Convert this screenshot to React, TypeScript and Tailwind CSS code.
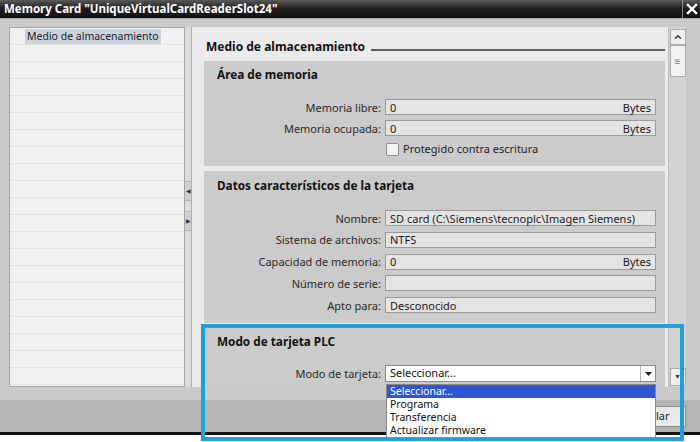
import { ChevronUp } from "lucide-react";

type FieldProps = { label: string; value?: string; unit?: string };

function Field({ label, value, unit }: FieldProps) {
  return (
    <div className="grid h-[16px] grid-cols-[177px_271px] items-center gap-x-[4px]">
      <span className="text-right text-[11px] leading-none text-[#2a2a2a]">{label}</span>
      <div className="flex h-[16px] items-center justify-between border border-[#9a9a9a] bg-[#e4e4e4] px-[4px] text-[11px] leading-none text-[#1a1a1a]">
        <span>{value}</span>
        {unit && <span>{unit}</span>}
      </div>
    </div>
  );
}

function Section({ title, children, className = "" }: { title: string; children?: React.ReactNode; className?: string }) {
  return (
    <div className={`bg-[#cbcbcb] pl-[13px] ${className}`}>
      <h3 className="text-[11.75px] font-bold leading-[16px] text-[#111]">{title}</h3>
      {children}
    </div>
  );
}

const dropdownItems = ["Seleccionar...", "Programa", "Transferencia", "Actualizar firmware"];

export default function App() {
  return (
    <div className="relative h-[442px] w-[700px] overflow-hidden bg-[#c6c6c6] font-['Noto_Sans',sans-serif]">
      {/* title bar */}
      <div className="flex h-[18px] bg-gradient-to-b from-[#5a5a5a] via-[#1d1d1d] to-[#121212]">
        <div className="flex-1 pl-[4px] text-[11.5px] font-bold leading-[18px] text-white">
          Memory Card "UniqueVirtualCardReaderSlot24"
        </div>
        <div className="flex w-[18px] items-center justify-center border-l border-[#8a8a8a]">
          <svg width="12" height="12" viewBox="0 0 12 12">
            <path d="M2 2 L10 10 M10 2 L2 10" stroke="white" strokeWidth="2.4" strokeLinecap="square" />
          </svg>
        </div>
      </div>

      {/* body */}
      <div className="flex h-[382px] border-t border-[#a8a8a8] bg-[#c9c9c9] pl-[9px] pt-[8px]">
        {/* tree panel */}
        <div className="h-[360px] w-[176px] overflow-hidden border border-[#a5a5a5] bg-[#f1f1f1]">
          {Array.from({ length: 22 }).map((_, i) => (
            <div key={i} className="flex h-[17px] items-center border-b border-[#e2e2e2] pl-[15px]">
              {i === 0 && (
                <span className="bg-[#cdd3dd] px-[2px] text-[10.5px] leading-[15px] text-[#222]">
                  Medio de almacenamiento
                </span>
              )}
            </div>
          ))}
        </div>

        {/* splitter */}
        <div className="flex h-[360px] w-[7px] flex-col border-r border-[#b0b0b0] bg-[#dcdcdc] pt-[154px]">
          <div className="flex h-[20px] items-center justify-center border-y border-[#b4b4b4] bg-[#cfcfcf] text-[6px] text-[#333]">◀</div>
          <div className="h-[10px]" />
          <div className="flex h-[20px] items-center justify-center border-y border-[#b4b4b4] bg-[#cfcfcf] text-[6px] text-[#333]">▶</div>
        </div>

        {/* content panel */}
        <div className="h-[360px] w-[476px] overflow-hidden bg-[#ebebeb] pl-[12px] pr-[3px] pt-[12px]">
          <div className="flex h-[16px] items-center gap-[6px] pl-[2px]">
            <h2 className="text-[12px] font-bold text-[#111]">Medio de almacenamiento</h2>
            <div className="mt-[6px] h-[2px] flex-1 bg-[#5c5c5c]" />
          </div>

          <Section title="Área de memoria" className="mt-[6px] h-[105px] pt-[5px]">
            <div className="-ml-[13px] mt-[17px] flex flex-col gap-[5px]">
              <Field label="Memoria libre:" value="0" unit="Bytes" />
              <Field label="Memoria ocupada:" value="0" unit="Bytes" />
              <div className="flex h-[16px] items-center gap-[4px] pl-[182px]">
                <div className="h-[13px] w-[13px] rounded-[2px] border border-[#8c8c8c] bg-[#f3f3f3]" />
                <span className="text-[11px] text-[#1e1e1e]">Protegido contra escritura</span>
              </div>
            </div>
          </Section>

          <Section title="Datos característicos de la tarjeta" className="mt-[5px] h-[152px] pt-[6px]">
            <div className="-ml-[13px] mt-[17px] flex flex-col gap-[5.75px]">
              <Field label="Nombre:" value="SD card (C:\Siemens\tecnoplc\Imagen Siemens)" />
              <Field label="Sistema de archivos:" value="NTFS" />
              <Field label="Capacidad de memoria:" value="0" unit="Bytes" />
              <Field label="Número de serie:" value="" />
              <Field label="Apto para:" value="Desconocido" />
            </div>
          </Section>

          <Section title="Modo de tarjeta PLC" className="mt-[5px] h-[80px] pt-[5px]">
            <div className="-ml-[13px] mt-[16px] grid h-[17px] grid-cols-[177px_271px] items-center gap-x-[4px]">
              <span className="text-right text-[11px] leading-none text-[#2a2a2a]">Modo de tarjeta:</span>
              <div className="flex h-[17px] items-center border border-[#8a8a8a] bg-white text-[11px] text-[#111]">
                <span className="flex-1 pl-[4px]">Seleccionar...</span>
                <div className="flex h-full w-[15px] items-center justify-center border-l border-[#b5b5b5]">
                  <svg width="7" height="4" viewBox="0 0 7 4">
                    <path d="M0 0 H7 L3.5 4 Z" fill="#222" />
                  </svg>
                </div>
              </div>
            </div>
          </Section>
        </div>

        {/* vertical scrollbar */}
        <div className="flex h-[360px] w-[18px] flex-col items-center border-l border-[#bdbdbd] bg-[#d3d3d3] pt-[2px]">
          <div className="flex h-[16px] w-[16px] items-center justify-center border border-[#aaa] bg-[#efefef]">
            <ChevronUp className="h-[10px] w-[10px] text-[#333]" strokeWidth={3.5} />
          </div>
          <div className="flex h-[32px] w-[16px] items-center justify-center border border-[#aaa] bg-[#f2f2f2] text-[10px] leading-none text-[#777]">≡</div>
          <div className="flex-1" />
          <div className="mb-[1px] flex h-[18px] w-[16px] items-center justify-center border border-[#aaa] bg-[#efefef] text-[7px] text-[#333]">▼</div>
        </div>
      </div>

      {/* button bar */}
      <div className="flex h-[32px] items-center justify-end bg-[#b4b4b4] pr-[14px]">
        <div className="flex h-[21px] w-[78px] items-center justify-center border border-[#8f8f8f] bg-[#e9e9e9] text-[11px] text-[#222]">
          Cancelar
        </div>
      </div>
      <div className="h-[3px] bg-[#111]" />
      <div className="h-[7px] bg-white" />

      {/* highlight frame */}
      <div className="absolute left-[201px] top-[324px] h-[117px] w-[483px] border-[4px] border-[#1ba2de]" />

      {/* open dropdown list */}
      <div className="absolute left-[386px] top-[384px] w-[270px] border border-[#8a8a8a] bg-white text-[10.5px] leading-[13px] text-[#111]">
        {dropdownItems.map((item, i) => (
          <div key={item} className={`h-[13px] pl-[3px] ${i === 0 ? "bg-[#2f55d4] text-white" : ""}`}>
            {item}
          </div>
        ))}
      </div>
    </div>
  );
}
